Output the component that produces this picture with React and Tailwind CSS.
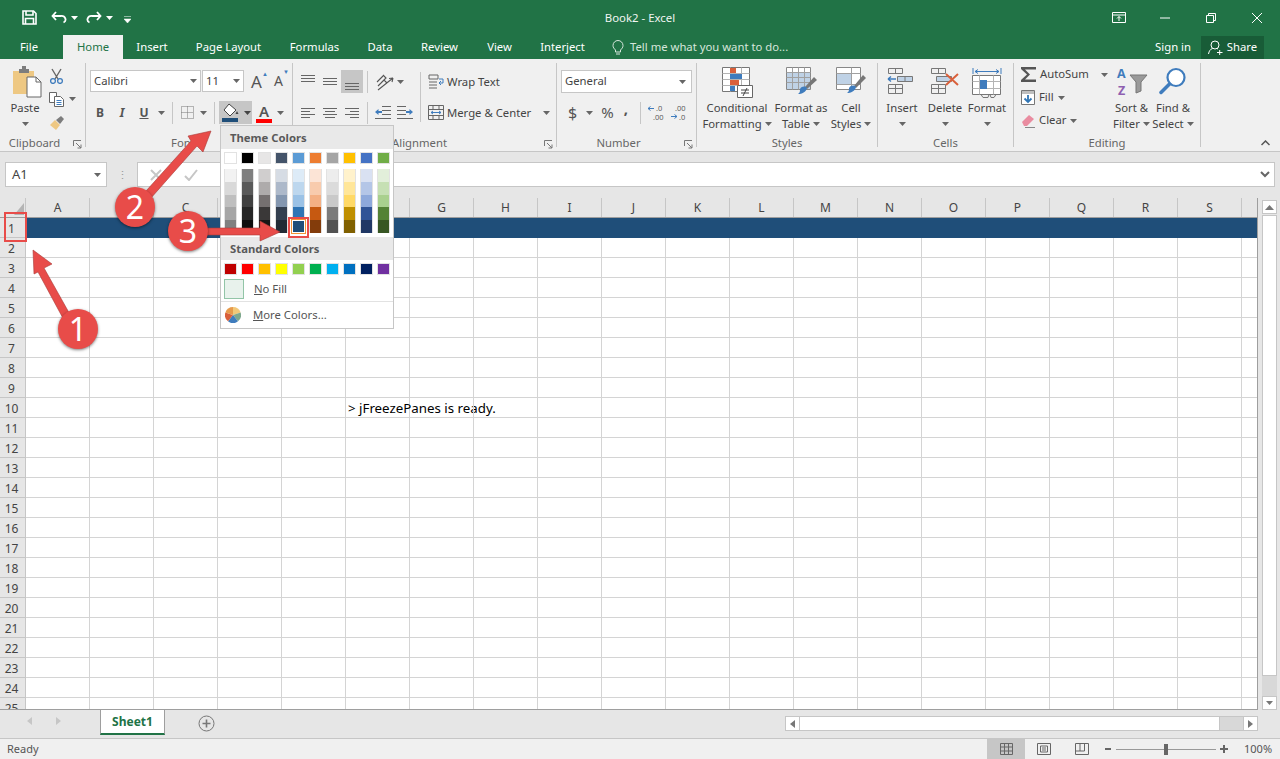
import React from "react";

const UI = "font-['Open_Sans',sans-serif]";

const TABS = [
  { name: "Insert", w: "w-[58px]" },
  { name: "Page Layout", w: "w-[95px]" },
  { name: "Formulas", w: "w-[77px]" },
  { name: "Data", w: "w-[54px]" },
  { name: "Review", w: "w-[65px]" },
  { name: "View", w: "w-[55px]" },
  { name: "Interject", w: "w-[71px]" },
];

const COLUMNS = ["A", "B", "C", "D", "E", "F", "G", "H", "I", "J", "K", "L", "M", "N", "O", "P", "Q", "R", "S"];
const ROWS = Array.from({ length: 25 }, (_, i) => i + 1);

const THEME = ["#ffffff", "#000000", "#e7e6e6", "#44546a", "#5b9bd5", "#ed7d31", "#a5a5a5", "#ffc000", "#4472c4", "#70ad47"];
const SHADES = [
  ["#f2f2f2", "#d9d9d9", "#bfbfbf", "#a6a6a6", "#808080"],
  ["#7f7f7f", "#595959", "#404040", "#262626", "#0d0d0d"],
  ["#d0cece", "#aeabab", "#757070", "#3a3838", "#171616"],
  ["#d6dce4", "#adb9ca", "#8497b0", "#333f4f", "#222b35"],
  ["#ddebf7", "#bdd7ee", "#9bc2e6", "#2f75b5", "#1f4e79"],
  ["#fce4d6", "#f8cbad", "#f4b084", "#c65911", "#833c0b"],
  ["#ededed", "#dbdbdb", "#c9c9c9", "#7b7b7b", "#525252"],
  ["#fff2cc", "#ffe699", "#ffd966", "#bf8f00", "#806000"],
  ["#d9e1f2", "#b4c6e7", "#8ea9db", "#305496", "#203764"],
  ["#e2efda", "#c6e0b4", "#a9d08e", "#548235", "#375623"],
];
const STANDARD = ["#c00000", "#ff0000", "#ffc000", "#ffff00", "#92d050", "#00b050", "#00b0f0", "#0070c0", "#002060", "#7030a0"];

const Caret = ({ color = "#666666" }) => (
  <svg width="7" height="4" viewBox="0 0 7 4" className="shrink-0">
    <path d="M0 0h7L3.500 4z" fill={color} />
  </svg>
);

const Launcher = () => (
  <svg width="9" height="9" viewBox="0 0 9 9" className="absolute right-[3px] top-[4px]">
    <path d="M.5 6V.5H8M3 3l5 5M8 4.500V8H4.500" fill="none" stroke="#777777" />
  </svg>
);

const Sep = ({ h = "h-[22px]" }) => <div className={`w-px bg-[#c6c6c6] ${h}`} />;

const Group = ({ w, label, pr = "", launcher, children }) => (
  <div className={`${w} flex h-[84px] shrink-0 flex-col border-r border-[#c6c6c6]`}>
    <div className="flex h-[73px] shrink-0">{children}</div>
    <div className={`relative h-[14px] shrink-0 text-center text-[11.3px] leading-[14px] text-[#666666] ${pr}`}>
      {label}
      {launcher && <Launcher />}
    </div>
  </div>
);

const StackBtn = ({ w, icon, lines, caret = true }) => (
  <div className={`${w} flex shrink-0 flex-col items-center whitespace-nowrap text-[11.3px] leading-[16px] text-[#444444]`}>
    <div className="flex h-[37px] items-end justify-center pb-[2px]">{icon}</div>
    {lines.map((t, i) => (
      <div key={t} className="flex items-center gap-[3px]">
        {t}
        {caret && i === lines.length - 1 && lines.length > 1 && <Caret />}
      </div>
    ))}
    {lines.length === 1 && caret && <div className="flex h-[16px] items-center"><Caret /></div>}
  </div>
);

const Lines = ({ rows }) => (
  <svg width="14" height="12" viewBox="0 0 14 12">
    {rows.map(([x1, x2, y]) => (
      <path key={y} d={`M${x1} ${y}.5H${x2}`} stroke="#666666" />
    ))}
  </svg>
);

// ribbon icons
const SaveIcon = () => (
  <svg width="15" height="15" viewBox="0 0 15 15" fill="none" stroke="#fff" strokeWidth="1.6">
    <path d="M1 1h10.500L14 3.500V14H1z" />
    <path d="M4 1v4h7V1M3.500 14V8.500h8V14" />
  </svg>
);
const UndoIcon = ({ flip }) => (
  <svg width="16" height="13" viewBox="0 0 16 13" fill="none" stroke="#fff" strokeWidth="1.8" className={flip ? "-scale-x-100" : ""}>
    <path d="M5 1 1.500 5 5 9M2 5h8a4 3.500 0 0 1 2.500 6.500" />
  </svg>
);
const PasteIcon = () => (
  <svg width="30" height="32" viewBox="0 0 30 32" className="ml-[3px]">
    <path d="M1 5h21v23H1z" fill="#eec883" />
    <path d="M7 3h3V0h4v3h3v4H7z" fill="#7d7d7d" />
    <path d="M15 11h9l5 5v15H15z" fill="#fff" stroke="#666666" />
    <path d="M24 11v5h5" fill="none" stroke="#666666" />
  </svg>
);
const CutIcon = () => (
  <svg width="15" height="16" viewBox="0 0 15 16" fill="none">
    <path d="M3 1l6 10M12 1 6 11" stroke="#666666" strokeWidth="1.4" />
    <circle cx="4" cy="13" r="2.400" stroke="#3f7cbd" strokeWidth="1.3" />
    <circle cx="11" cy="13" r="2.400" stroke="#3f7cbd" strokeWidth="1.3" />
  </svg>
);
const CopyIcon = () => (
  <svg width="15" height="15" viewBox="0 0 15 15" fill="#fff" stroke="#666666">
    <path d="M.5.500h7v10h-7z" />
    <path d="M5.500 4.500h6l3 3v7h-9z" />
    <path d="M7.500 8.500h5M7.500 10.500h5M7.500 12.500h5" stroke="#3f7cbd" />
  </svg>
);
const BrushIcon = () => (
  <svg width="16" height="15" viewBox="0 0 16 15">
    <path d="M1 9l5-5 5 5-4 5z" fill="#eec883" />
    <path d="M7 4l5-4 3 3-4 5z" fill="#7d7d7d" />
  </svg>
);
const FillIcon = () => (
  <svg width="17" height="19" viewBox="0 0 17 19">
    <path d="M7 1l7 6-6 6-6-6z" fill="#fff" stroke="#444444" />
    <path d="M15 8l1.500 3h-3z" fill="#444444" />
    <path d="M0 15h16v4H0z" fill="#1f4e79" />
  </svg>
);
const OrientIcon = () => (
  <svg width="20" height="18" viewBox="0 0 20 18" fill="none" stroke="#555555">
    <path d="M2 9l6-6M3 13l6-6 3 3M8 2l3 3-5 5" strokeWidth="1.1" />
    <path d="M3 17L18 5M18 5l-4 .5M18 5l-1 4" strokeWidth="1.1" />
  </svg>
);
const IndentIcon = ({ flip }) => (
  <svg width="16" height="13" viewBox="0 0 16 13" className={flip ? "-scale-x-100" : ""}>
    <path d="M7 .5h9M7 4.500h9M7 8.500h9M0 12.500h16" stroke="#666666" fill="none" />
    <path d="M0 6l3.500-3v2H7v2H3.500v2z" fill="#3f7cbd" />
  </svg>
);
const WrapIcon = () => (
  <svg width="16" height="15" viewBox="0 0 16 15" fill="none">
    <path d="M1 1h9v4H1zM1 8h8M1 11h8M1 14h8" stroke="#666666" />
    <path d="M11 5h4v4h-4M13 7l-2 2 2 2" stroke="#3f7cbd" />
  </svg>
);
const MergeIcon = () => (
  <svg width="16" height="15" viewBox="0 0 16 15" fill="none">
    <path d="M.5.500h15v14H.5zM.5 4.500h15M.5 10.500h15M5 .5v4M11 .5v4M5 10.500v4M11 10.500v4" stroke="#666666" />
    <path d="M3 7.500h10M3 7.500l2-1.500M3 7.500l2 1.500M13 7.500l-2-1.500M13 7.500l-2 1.500" stroke="#3f7cbd" />
  </svg>
);
const DecIcon = ({ up }) => (
  <svg width="17" height="16" viewBox="0 0 17 16" fontFamily="Open Sans, sans-serif" fontSize="7.5" fill="#555555" className="overflow-visible">
    {up ? (
      <>
        <path d="M0 3.500h6M0 3.500l2.500-2M0 3.500l2.500 2" stroke="#3f7cbd" fill="none" />
        <text x="8" y="6">.0</text>
        <text x="5" y="15">.00</text>
      </>
    ) : (
      <>
        <text x="4" y="6">.00</text>
        <path d="M0 11.500h6M6 11.500l-2.500-2M6 11.500l-2.500 2" stroke="#3f7cbd" fill="none" />
        <text x="8" y="15">.0</text>
      </>
    )}
  </svg>
);
const CondIcon = () => (
  <svg width="31" height="31" viewBox="0 0 31 31" fill="none">
    <path d="M.5.500h27v24H.5z" fill="#fff" stroke="#777777" />
    <path d="M8.500.5v24M19.500.5v24M.5 6.500h27M.5 12.500h27M.5 18.500h27" stroke="#b4b4b4" />
    <path d="M8 1h6v5H8z" fill="#d9603b" />
    <path d="M8 7h12v5H8z" fill="#3f7cbd" />
    <path d="M8 13h9v5H8z" fill="#d9603b" />
    <path d="M8 19h5v5H8z" fill="#3f7cbd" />
    <path d="M15.500 18.500h15v12h-15z" fill="#fff" stroke="#666666" />
    <path d="M19 23h8M19 26h8M25 21l-4 8" stroke="#444444" />
  </svg>
);
const TableIcon = () => (
  <svg width="31" height="31" viewBox="0 0 31 31" fill="none">
    <path d="M.5.500h24v22H.5z" fill="#fff" stroke="#888888" />
    <path d="M1 5h23v17H1z" fill="#bfd2e6" />
    <path d="M.5 5.500h24M.5 10.500h24M.5 15.500h24M6.500.5v22M12.500.5v22M18.500.5v22" stroke="#a0a0a0" />
    <path d="M19 20l9-10 3 3-10 9z" fill="#777777" />
    <path d="M14 22c2-3 5-3 7-1-1 4-5 6-9 6 2-1 2-3 2-5z" fill="#3f7cbd" />
  </svg>
);
const CellStyleIcon = () => (
  <svg width="30" height="31" viewBox="0 0 30 31" fill="none">
    <path d="M.5.500h24v22H.5z" fill="#fff" stroke="#888888" />
    <path d="M1 6h14v11H1z" fill="#bfd2e6" />
    <path d="M.5 6.500h24M.5 17.500h24M15.500.5v22" stroke="#a0a0a0" />
    <path d="M18 19l9-11 3 3-10 10z" fill="#777777" />
    <path d="M13 21c2-3 5-3 7-1-1 4-5 6-9 6 2-1 2-3 2-5z" fill="#3f7cbd" />
  </svg>
);
const CellRows = ({ children }) => (
  <svg width="30" height="31" viewBox="0 0 30 31" fill="none">
    <path d="M1.500 1.500h14v5h-14zM8.500 1.500v5M1.500 17.500h14v9h-14zM1.500 21.500h14M8.500 17.500v9" stroke="#777777" />
    {children}
  </svg>
);
const FormatIcon = () => (
  <svg width="30" height="31" viewBox="0 0 30 31" fill="none">
    <path d="M1 1v6M29 1v6M3 4.500h24M3 4.500l3-2M3 4.500l3 2M27 4.500l-3-2M27 4.500l-3 2" stroke="#3f7cbd" />
    <path d="M.5 8.500h28v19H.5z" fill="#fff" stroke="#777777" />
    <path d="M.5 14.500h28M.5 21.500h28M7.500 8.500v19M21.500 8.500v19" stroke="#b4b4b4" />
    <path d="M8 13h7v9H8z" fill="#3f7cbd" />
    <path d="M9 27.500l2 3h5l1-3M18 27.500l1 3h3l2-3" stroke="#777777" />
  </svg>
);
const SumIcon = () => (
  <svg width="15" height="15" viewBox="0 0 15 15">
    <path d="M0 0h15v2.500H4L9 7.500l-5 5h11V15H0v-2l6-5.500L0 2z" fill="#555555" />
  </svg>
);
const FillDownIcon = () => (
  <svg width="14" height="15" viewBox="0 0 14 15" fill="none">
    <path d="M.5.500h13v14H.5z" fill="#fff" stroke="#777777" />
    <path d="M1 1h12v3H1z" fill="#bfbfbf" />
    <path d="M7 5v7M3.500 8.500 7 12l3.500-3.500" stroke="#2f75b5" strokeWidth="1.8" />
  </svg>
);
const EraserIcon = () => (
  <svg width="14" height="14" viewBox="0 0 14 14">
    <path d="M1 8l7-7 5 4-7 7H3z" fill="#e98ca0" />
    <path d="M4 13.500h10" stroke="#888888" />
  </svg>
);
const SortIcon = () => (
  <svg width="30" height="31" viewBox="0 0 30 31" fontFamily="Open Sans, sans-serif" fontWeight="700" fontSize="12.5" className="overflow-visible">
    <text x="0" y="11" fill="#3f7cbd">A</text>
    <text x="1" y="28" fill="#8e5fb0">Z</text>
    <path d="M13 8h17l-6 7v9l-5 2V15z" fill="#9a9a9a" stroke="#777777" />
  </svg>
);
const FindIcon = () => (
  <svg width="28" height="31" viewBox="0 0 28 31" fill="none">
    <circle cx="17" cy="10.500" r="8.500" stroke="#3f7cbd" strokeWidth="2.200" fill="#fff" />
    <path d="M10.500 17 2 25.500" stroke="#3f7cbd" strokeWidth="3.500" strokeLinecap="round" />
  </svg>
);

const Swatch = ({ color }) => (
  <div className="h-[12px] w-[13px] border border-[#e2e2e2]" style={{ backgroundColor: color }} />
);

const ColorMenu = () => (
  <div className={`${UI} absolute left-[220px] top-[125px] h-[204px] w-[174px] border border-[#c6c6c6] bg-white`}>
    <div className="flex h-[23px] items-center bg-[#e9e9e9] pl-[9px] pt-px text-[11.3px] font-bold text-[#595959]">Theme Colors</div>
    <div className="mt-[3px] flex gap-[4px] pl-[3px]">
      {THEME.map((c) => (
        <Swatch key={c} color={c} />
      ))}
    </div>
    <div className="mt-[5px] flex h-[64px] gap-[4px] pl-[3px]">
      {SHADES.map((col) => (
        <div key={col[0]} className="flex h-full w-[13px] flex-col border-x border-[#e2e2e2]">
          {col.map((c) =>
            c === "#1f4e79" ? (
              <div key={c} className="relative flex-1">
                <div className="absolute -inset-x-[2px] -inset-y-px border border-[#f29436] bg-white p-px">
                  <div className="h-full bg-[#1f4e79]" />
                </div>
              </div>
            ) : (
              <div key={c} className="flex-1" style={{ backgroundColor: c }} />
            )
          )}
        </div>
      ))}
    </div>
    <div className="mt-[4px] flex h-[23px] items-center bg-[#e9e9e9] pl-[9px] pt-px text-[11.3px] font-bold text-[#595959]">Standard Colors</div>
    <div className="mt-[3px] flex gap-[4px] pl-[3px]">
      {STANDARD.map((c) => (
        <Swatch key={c} color={c} />
      ))}
    </div>
    <div className="mt-[4px] flex h-[20px] items-center pl-[3px] text-[11.3px] text-[#555555]">
      <div className="h-[20px] w-[20px] border border-[#92c5a7] bg-[#e8f2ec]" />
      <span className="ml-[10px]"><span className="underline">N</span>o Fill</span>
    </div>
    <div className="mt-[2px] flex h-[27px] items-center border-t border-[#e2e2e2] pl-[4px] text-[11.3px] text-[#555555]">
      <svg width="16" height="16" viewBox="0 0 16 16">
        <path d="M8 8V0a8 8 0 0 1 7.600 5.500z" fill="#f2c879" />
        <path d="M8 8l7.600-2.500A8 8 0 0 1 13 14.300z" fill="#7fa88e" />
        <path d="M8 8l5 6.300a8 8 0 0 1-10 0z" fill="#3f7cbd" />
        <path d="M8 8l-5 6.300A8 8 0 0 1 .4 5.500z" fill="#d9603b" />
        <path d="M8 8 .4 5.500A8 8 0 0 1 8 0z" fill="#e79a4b" />
      </svg>
      <span className="ml-[12px]"><span className="underline">M</span>ore Colors...</span>
    </div>
  </div>
);

const Marker = ({ pos, n }) => (
  <div className={`${pos} absolute flex h-[40px] w-[40px] items-center justify-center rounded-full bg-[#e84c49] font-['Liberation_Sans',sans-serif] text-[32px] leading-none text-white shadow-[0_1px_3px_rgba(0,0,0,0.5)]`}>
    {n}
  </div>
);

const Annotations = () => (
  <>
    <svg width="1280" height="759" viewBox="0 0 1280 759" className="absolute left-0 top-0">
      <g fill="#e84c49" stroke="#a83a38" strokeWidth="0.6">
        <polygon points="33,250 52,264 44,268 72,318 65,322 38,272 34,274" />
        <polygon points="211,131 203,152 197,146 143,207 137,201 191,141 188,136" />
        <polygon points="280,232 260,241 260,235 200,235 200,228 260,228 260,221" />
      </g>
    </svg>
    <div className="absolute left-[4px] top-[212px] h-[30px] w-[23px] border-2 border-[#e84c49]" />
    <div className="absolute left-[288px] top-[217px] h-[21px] w-[21px] border-2 border-[#e84c49]" />
    <Marker pos="left-[58px] top-[309px]" n="1" />
    <Marker pos="left-[115px] top-[187px]" n="2" />
    <Marker pos="left-[168px] top-[211px]" n="3" />
  </>
);

export default function App() {
  return (
    <div className={`${UI} relative flex h-[759px] w-[1280px] flex-col overflow-hidden bg-[#e6e6e6]`}>
      {/* title bar */}
      <div className="relative flex h-[35px] shrink-0 items-center bg-[#217346] text-white">
        <div className="ml-[22px]"><SaveIcon /></div>
        <div className="ml-[14px]"><UndoIcon /></div>
        <div className="ml-[4px]"><Caret color="#ffffff" /></div>
        <div className="ml-[8px]"><UndoIcon flip /></div>
        <div className="ml-[4px]"><Caret color="#ffffff" /></div>
        <svg width="7" height="7" viewBox="0 0 7 7" className="ml-[11px] mt-[3px]">
          <path d="M0 .5h7M0 3h7L3.500 7z" fill="#fff" stroke="#fff" strokeWidth="0.5" />
        </svg>
        <div className="absolute left-0 right-0 top-[9px] text-center text-[11.4px] leading-[17px] text-[#f0f5f2]">Book2 - Excel</div>
        <div className="ml-auto flex items-center">
          <svg width="14" height="11" viewBox="0 0 14 11" fill="none" stroke="#fff">
            <path d="M.5.500h13v10H.5zM.5 3h13M7 9V4.500M5 6.500l2-2 2 2" />
          </svg>
          <svg width="10" height="2" viewBox="0 0 10 2" className="ml-[34px]"><path d="M0 1h10" stroke="#fff" /></svg>
          <svg width="10" height="10" viewBox="0 0 10 10" fill="none" stroke="#fff" className="ml-[36px]">
            <path d="M.5 2.500h7v7h-7zM2.500 2.500v-2h7v7h-2" />
          </svg>
          <svg width="10" height="10" viewBox="0 0 10 10" fill="none" stroke="#fff" className="ml-[36px] mr-[18px]">
            <path d="M0 0l10 10M10 0 0 10" />
          </svg>
        </div>
      </div>

      {/* tab row */}
      <div className="flex h-[24px] shrink-0 items-center bg-[#217346] text-[11.3px] text-white">
        <div className="w-[58px] text-center">File</div>
        <div className="ml-[5px] flex h-full w-[60px] items-center justify-center bg-[#f0f0f0] text-[#217346]">Home</div>
        {TABS.map((t) => (
          <div key={t.name} className={`${t.w} text-center`}>{t.name}</div>
        ))}
        <svg width="12" height="15" viewBox="0 0 12 15" fill="none" stroke="#d6e6dc" className="ml-[14px]">
          <path d="M3.500 10C2 8.500 1 7.500 1 5.500a5 5 0 0 1 10 0c0 2-1 3-2.500 4.500v2h-5zM4 14h4" />
        </svg>
        <div className="ml-[6px] text-[#d6e6dc]">Tell me what you want to do...</div>
        <div className="ml-auto">Sign in</div>
        <div className="ml-[10px] mr-[16px] flex h-[23px] w-[63px] items-center justify-center gap-[4px] bg-[#185c37]">
          <svg width="15" height="15" viewBox="0 0 15 15" fill="none" stroke="#fff">
            <circle cx="7" cy="5" r="4" />
            <path d="M.5 14c.5-3 2-5 4-5.500M9 8.500l1 .5M9 12.500h5.500M11.700 10v5" />
          </svg>
          Share
        </div>
      </div>

      {/* ribbon */}
      <div className="relative flex h-[93px] shrink-0 border-b border-[#c6c6c6] bg-[#f0f0f0] pt-[4px]">
        <Group w="w-[86px]" label="Clipboard" pr="pr-[16px]" launcher>
          <div className="w-[49px] shrink-0 pl-[1px]">
            <StackBtn w="w-[48px]" icon={<PasteIcon />} lines={["Paste"]} />
          </div>
          <div className="flex flex-col pt-[1px]">
            <div className="flex h-[23px] items-center"><CutIcon /></div>
            <div className="flex h-[24px] items-center gap-[5px]"><CopyIcon /><Caret /></div>
            <div className="flex h-[24px] items-center"><BrushIcon /></div>
          </div>
        </Group>

        <Group w="w-[207px]" label="Font" pr="pr-[12px]" launcher>
          <div className="flex flex-col pt-[7px]">
            <div className="ml-[4px] flex h-[22px] items-center">
              <div className="flex h-full w-[111px] items-center justify-between border border-[#c6c6c6] bg-white pl-[3px] pr-[3px] text-[11.3px] text-[#444444]">
                Calibri <Caret />
              </div>
              <div className="ml-px flex h-full w-[42px] items-center justify-between border border-[#c6c6c6] bg-white pl-[3px] pr-[3px] text-[11.3px] text-[#444444]">
                11 <Caret />
              </div>
              <div className="relative ml-[7px] w-[14px] text-[17px] leading-none text-[#555555]">A<span className="absolute -right-[3px] -top-[2px] text-[6px] text-[#3f7cbd]">▲</span></div>
              <div className="relative ml-[9px] w-[12px] text-[14px] leading-none text-[#555555]">A<span className="absolute -right-[3px] -top-[5px] text-[6px] text-[#3f7cbd]">▼</span></div>
            </div>
            <div className="mt-[9px] flex h-[23px] items-center text-[#555555]">
              <div className="ml-[3px] w-[22px] text-center text-[12px] font-bold">B</div>
              <div className="w-[22px] text-center text-[12px] font-bold italic">I</div>
              <div className="w-[22px] text-center text-[12px] font-bold underline">U</div>
              <div className="flex w-[12px] justify-center"><Caret /></div>
              <div className="ml-[5px]"><Sep /></div>
              <svg width="13" height="13" viewBox="0 0 13 13" fill="none" stroke="#777777" strokeDasharray="1 1" className="ml-[8px]">
                <path d="M.5.500h12v12H.5zM6.500.5v12M.5 6.500h12" />
              </svg>
              <div className="ml-[6px]"><Caret /></div>
              <div className="ml-[7px]"><Sep /></div>
              <div className="ml-[4px] flex h-full w-[33px] items-center gap-[5px] bg-[#c6c6c6] pl-[3px]">
                <FillIcon />
                <Caret color="#444444" />
              </div>
              <div className="relative ml-[4px] h-[20px] w-[16px] text-center text-[15px] font-semibold leading-[16px]">
                A
                <div className="absolute bottom-0 left-0 h-[4px] w-[16px] bg-[#ff0000]" />
              </div>
              <div className="ml-[5px]"><Caret /></div>
            </div>
          </div>
        </Group>

        <Group w="w-[264px]" label="Alignment" pr="pr-[10px]" launcher>
          <div className="flex flex-col pl-[8px] pt-[7px]">
            <div className="flex h-[23px] items-center">
              <div className="mb-[5px]"><Lines rows={[[0, 14, 2], [0, 14, 5], [0, 14, 8]]} /></div>
              <div className="ml-[8px]"><Lines rows={[[0, 14, 2], [0, 14, 5], [0, 14, 8]]} /></div>
              <div className="ml-[4px] flex h-[23px] w-[22px] items-end justify-center bg-[#c6c6c6] pb-px"><Lines rows={[[0, 14, 3], [0, 14, 6], [0, 14, 9]]} /></div>
              <div className="ml-[4px]"><Sep /></div>
              <div className="ml-[7px]"><OrientIcon /></div>
              <div className="ml-[2px]"><Caret /></div>
            </div>
            <div className="mt-[8px] flex h-[23px] items-center">
              <Lines rows={[[0, 14, 1], [0, 9, 4], [0, 14, 7], [0, 9, 10]]} />
              <div className="ml-[8px]"><Lines rows={[[0, 14, 1], [2, 12, 4], [0, 14, 7], [2, 12, 10]]} /></div>
              <div className="ml-[8px]"><Lines rows={[[0, 14, 1], [5, 14, 4], [0, 14, 7], [5, 14, 10]]} /></div>
              <div className="ml-[8px]"><Sep /></div>
              <div className="ml-[7px]"><IndentIcon /></div>
              <div className="ml-[6px]"><IndentIcon flip /></div>
              <div className="ml-[7px]"><Sep h="h-[50px] -mt-[31px]" /></div>
            </div>
          </div>
          <div className="flex flex-col pl-[7px] pt-[7px] text-[11.3px] text-[#444444]">
            <div className="flex h-[23px] items-center gap-[3px]"><WrapIcon /> <span className="pt-px">Wrap Text</span></div>
            <div className="mt-[8px] flex h-[23px] items-center gap-[3px]"><MergeIcon /> <span className="pt-px">Merge &amp; Center</span> <span className="ml-[9px]"><Caret /></span></div>
          </div>
        </Group>

        <Group w="w-[140px]" label="Number" pr="pr-[16px]" launcher>
          <div className="flex w-full flex-col pl-[4px] pt-[7px]">
            <div className="flex h-[23px] w-[131px] items-center justify-between border border-[#c6c6c6] bg-white pl-[3px] pr-[5px] text-[11.3px] text-[#444444]">
              General <Caret />
            </div>
            <div className="mt-[8px] flex h-[23px] items-center text-[#555555]">
              <div className="ml-[7px] text-[16px] leading-none">$</div>
              <div className="ml-[9px]"><Caret /></div>
              <div className="ml-[8px] text-[15px] leading-none">%</div>
              <div className="mb-[8px] ml-[10px] text-[15px] font-bold leading-none">,</div>
              <div className="ml-[12px]"><Sep /></div>
              <div className="ml-[7px]"><DecIcon up /></div>
              <div className="ml-[6px]"><DecIcon /></div>
            </div>
          </div>
        </Group>

        <Group w="w-[181px]" label="Styles">
          <div className="ml-[8px] flex">
            <StackBtn w="w-[64px]" icon={<CondIcon />} lines={["Conditional", "Formatting"]} />
            <StackBtn w="w-[64px]" icon={<TableIcon />} lines={["Format as", "Table"]} />
            <StackBtn w="w-[36px]" icon={<CellStyleIcon />} lines={["Cell", "Styles"]} />
          </div>
        </Group>

        <Group w="w-[136px]" label="Cells">
          <div className="ml-px flex">
            <StackBtn
              w="w-[46px]"
              icon={
                <CellRows>
                  <path d="M10.500 9.500h15v5h-15zM18 9.500v5" stroke="#777777" fill="#bfd2e6" />
                  <path d="M1 12h8M1 12l3-2.500M1 12l3 2.500" stroke="#3f7cbd" strokeWidth="1.4" />
                </CellRows>
              }
              lines={["Insert"]}
            />
            <StackBtn
              w="w-[40px]"
              icon={
                <CellRows>
                  <path d="M6.500 9.500h15v5h-15z" stroke="#777777" fill="#bfd2e6" />
                  <path d="M16 7l12 11M28 7 16 18" stroke="#d9603b" strokeWidth="2" />
                </CellRows>
              }
              lines={["Delete"]}
            />
            <StackBtn w="w-[44px]" icon={<FormatIcon />} lines={["Format"]} />
          </div>
        </Group>

        <Group w="w-[187px]" label="Editing">
          <div className="flex w-[98px] shrink-0 flex-col pl-[7px] text-[11.3px] text-[#444444]">
            <div className="flex h-[23px] items-center gap-[4px]"><SumIcon /> AutoSum <span className="ml-[8px]"><Caret /></span></div>
            <div className="flex h-[23px] items-center gap-[4px]"><FillDownIcon /> Fill <Caret /></div>
            <div className="flex h-[23px] items-center gap-[4px]"><EraserIcon /> Clear <Caret /></div>
          </div>
          <StackBtn w="w-[39px]" icon={<SortIcon />} lines={["Sort &", "Filter"]} />
          <StackBtn w="w-[44px]" icon={<FindIcon />} lines={["Find &", "Select"]} />
        </Group>

        <div className="flex flex-1 items-end justify-end pb-[5px] pr-[10px]">
          <svg width="9" height="6" viewBox="0 0 9 6" fill="none" stroke="#555555" strokeWidth="1.5">
            <path d="M.5 5l4-4 4 4" />
          </svg>
        </div>
      </div>

      {/* formula bar */}
      <div className="flex h-[46px] shrink-0 items-start pl-[5px] pr-[5px] pt-[10px]">
        <div className="flex h-[25px] w-[102px] items-center justify-between border border-[#c6c6c6] bg-white pl-[6px] pr-[5px] text-[13px] text-[#444444]">
          A1 <Caret />
        </div>
        <div className="flex h-[25px] w-[30px] items-center justify-center text-[11px] leading-[4px] text-[#999999]">⋮</div>
        <div className="flex h-[25px] flex-1 items-center justify-between border border-[#c6c6c6] bg-white pr-[4px]">
          <div className="flex">
            <svg width="12" height="12" viewBox="0 0 12 12" fill="none" stroke="#c6c6c6" strokeWidth="2" className="ml-[12px]">
              <path d="M1 1l10 10M11 1 1 11" />
            </svg>
            <svg width="14" height="12" viewBox="0 0 14 12" fill="none" stroke="#c6c6c6" strokeWidth="2" className="ml-[22px]">
              <path d="M1 7l4 4 8-10" />
            </svg>
          </div>
          <svg width="10" height="7" viewBox="0 0 10 7" fill="none" stroke="#666666" strokeWidth="2">
            <path d="M1 1l4 4 4-4" />
          </svg>
        </div>
      </div>

      {/* sheet */}
      <div className="flex min-h-0 flex-1">
        <div className="min-w-0 flex-1 overflow-hidden border-b border-r border-[#9e9e9e] bg-white">
          <div className="flex h-[20px] border-b border-[#9e9e9e] bg-[#e6e6e6]">
            <div className="relative h-full w-[26px] shrink-0 border-r border-[#c6c6c6]">
              <svg width="10" height="12" viewBox="0 0 10 12" className="absolute left-[14px] top-[5px]">
                <path d="M10 0v12H0z" fill="#b4b4b4" />
              </svg>
            </div>
            {COLUMNS.map((c) => (
              <div key={c} className="flex h-full w-16 shrink-0 items-center justify-center border-r border-[#c6c6c6] text-[12px] text-[#444444]">
                {c}
              </div>
            ))}
          </div>
          {ROWS.map((r) => (
            <div key={r} className={`flex h-[20px] ${r === 1 ? "bg-[#1f4e79]" : ""}`}>
              <div className="flex h-full w-[26px] shrink-0 items-center justify-center border-b border-r border-[#c6c6c6] bg-[#e6e6e6] pr-[2px] pt-[2px] text-[12px] text-[#444444]">
                {r}
              </div>
              {COLUMNS.map((c) => (
                <div key={c} className={`h-full w-16 shrink-0 ${r === 1 ? "" : "border-b border-r border-[#d4d4d4]"}`}>
                  {r === 10 && c === "F" && (
                    <div className="whitespace-nowrap pl-[2px] font-['Lato',sans-serif] text-[13.3px] leading-[20px] text-black">&gt; jFreezePanes is ready.</div>
                  )}
                </div>
              ))}
              <div className={`h-full flex-1 ${r === 1 ? "" : "border-b border-[#d4d4d4]"}`} />
            </div>
          ))}
        </div>
        <div className="flex w-[22px] shrink-0 flex-col pl-[4px] pr-[3px] pt-[2px]">
          <div className="flex h-[14px] items-center justify-center border border-[#c6c6c6] bg-white"><svg width="9" height="5" viewBox="0 0 9 5"><path d="M0 5h9L4.500 0z" fill="#777777" /></svg></div>
          <div className="mt-px h-[461px] border border-[#c6c6c6] bg-white" />
          <div className="flex-1 bg-[#d8d8d8]" />
          <div className="flex h-[14px] items-center justify-center border border-[#c6c6c6] bg-white"><Caret color="#777777" /></div>
        </div>
      </div>

      {/* sheet tabs */}
      <div className="flex h-[28px] shrink-0 items-start">
        <div className="flex h-[22px] w-[100px] items-center pl-[27px]">
          <svg width="5" height="8" viewBox="0 0 5 8"><path d="M5 0v8L0 4z" fill="#c6c6c6" /></svg>
          <svg width="5" height="8" viewBox="0 0 5 8" className="ml-[24px]"><path d="M0 0v8l5-4z" fill="#c6c6c6" /></svg>
        </div>
        <div className="flex h-[25px] w-[65px] items-center justify-center border-x border-b-2 border-x-[#9e9e9e] border-b-[#217346] bg-white text-[12px] font-bold text-[#217346]">Sheet1</div>
        <svg width="17" height="17" viewBox="0 0 17 17" fill="none" stroke="#777777" className="ml-[33px] mt-[5px]">
          <circle cx="8.500" cy="8.500" r="7.500" />
          <path d="M4.500 8.500h8M8.500 4.500v8" strokeWidth="1.600" />
        </svg>
        <div className="ml-[570px] mt-[6px] flex h-[15px] w-[473px] border-y border-[#c6c6c6] bg-[#d8d8d8]">
          <div className="flex h-full w-[15px] items-center justify-center border-x border-[#c6c6c6] bg-white">
            <svg width="5" height="8" viewBox="0 0 5 8"><path d="M5 0v8L0 4z" fill="#777777" /></svg>
          </div>
          <div className="h-full w-[420px] border-r border-[#c6c6c6] bg-white" />
          <div className="flex-1" />
          <div className="flex h-full w-[15px] items-center justify-center border-x border-[#c6c6c6] bg-white">
            <svg width="5" height="8" viewBox="0 0 5 8"><path d="M0 0v8l5-4z" fill="#777777" /></svg>
          </div>
        </div>
      </div>

      {/* status bar */}
      <div className="flex h-[21px] shrink-0 items-center border-t border-[#c6c6c6] bg-[#f0f0f0] text-[11px] text-[#555555]">
        <div className="ml-[7px]">Ready</div>
        <div className="ml-auto flex h-full w-[38px] items-center justify-center bg-[#c6c6c6]">
          <svg width="13" height="12" viewBox="0 0 13 12" fill="none" stroke="#666666">
            <path d="M.5.500h12v11H.5zM4.500.500v11M8.500.500v11M.5 4h12M.5 8h12" />
          </svg>
        </div>
        <svg width="14" height="12" viewBox="0 0 14 12" fill="none" stroke="#666666" className="ml-[12px]">
          <path d="M.5.500h13v11H.5zM3.500 3h7v6h-7zM5 5h4M5 7h4" />
        </svg>
        <svg width="14" height="12" viewBox="0 0 14 12" fill="none" stroke="#666666" className="ml-[24px]">
          <path d="M.5.500h13v11H.5zM.5 8h9V.5M5 .5V8" />
        </svg>
        <div className="ml-[16px] h-[2px] w-[6px] bg-[#666666]" />
        <div className="ml-[5px] flex w-[100px] items-center">
          <div className="h-px flex-1 bg-[#999999]" />
          <div className="h-[11px] w-[4px] bg-[#666666]" />
          <div className="h-px flex-1 bg-[#999999]" />
        </div>
        <svg width="8" height="8" viewBox="0 0 8 8" className="ml-[4px]"><path d="M0 4h8M4 0v8" stroke="#666666" strokeWidth="2" /></svg>
        <div className="ml-[16px] mr-[8px] w-[28px] text-right">100%</div>
      </div>

      <ColorMenu />
      <Annotations />
    </div>
  );
}
